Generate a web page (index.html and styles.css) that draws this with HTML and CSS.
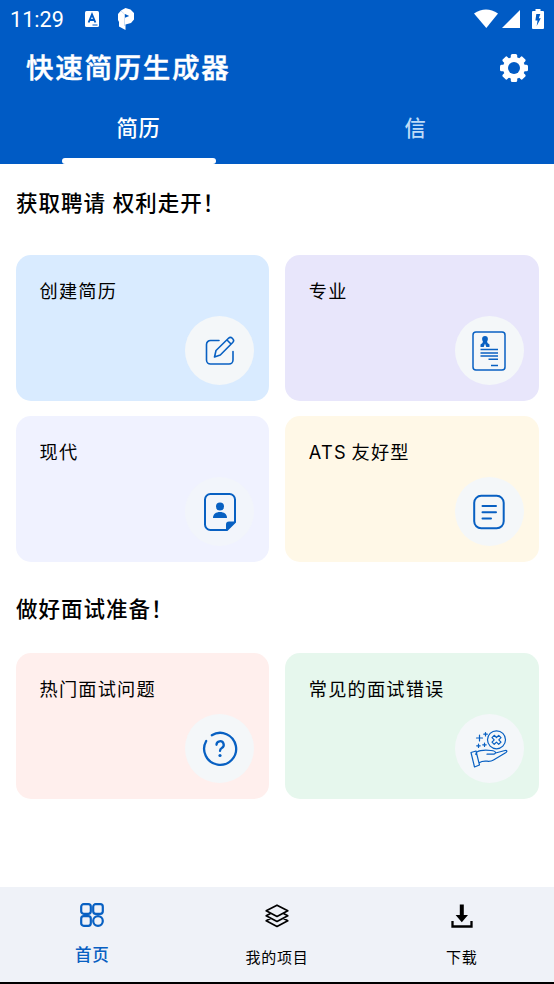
FILE: index.html
```
<!DOCTYPE html>
<html lang="zh-CN">
<head>
    <meta charset="UTF-8">
    <meta name="viewport" content="width=device-width, initial-scale=1.0">
    <title>快速简历生成器</title>
    <link rel="stylesheet" href="styles.css">
</head>
<body>

<header class="header">
    <div class="status-bar">
        <span class="time">11:29</span>
        <svg class="status-app" width="14" height="16" viewBox="0 0 14 16">
            <rect width="14" height="16" rx="1.5" fill="#fff"/>
            <path d="M3.6 11.5L7 3.5l3.4 8M4.8 9h4.4" fill="none" stroke="#005bc5" stroke-width="1.9"/>
            <path d="M7.5 14h5" stroke="#005bc5" stroke-width="1"/>
        </svg>
        <svg class="status-p" width="16" height="22" viewBox="0 0 16 22">
            <path d="M0 6l3-3.5L7.5 0l5 1.500L16 5v6.500L13 15l-5.500 1.500V22L1 18.500V14l-1-2z" fill="#fff"/>
            <path d="M7 6l4.200 2L7 9.800z" fill="#005bc5"/>
            <path d="M3 3l3.500 3v12" fill="none" stroke="#005bc5" stroke-opacity=".35" stroke-width=".6"/>
        </svg>
        <svg class="wifi" width="24" height="19" viewBox="0 0 24 19">
            <path d="M0 4.500Q12-3.500 24 4.500L12.300 19z" fill="#fff"/>
        </svg>
        <svg class="signal" width="18" height="18" viewBox="0 0 18 18">
            <path d="M0 18L18 0v18z" fill="#fff"/>
        </svg>
        <svg class="battery" width="12" height="20" viewBox="0 0 12 20">
            <path d="M3.500 0h5v2H11a1 1 0 0 1 1 1v16a1 1 0 0 1-1 1H1a1 1 0 0 1-1-1V3a1 1 0 0 1 1-1h2.500z" fill="#fff"/>
            <path d="M4.300 5h4L6.800 9.200h2L4.700 17l.8-5.500H3.400z" fill="#005bc5"/>
        </svg>
    </div>
    <div class="title-bar">
        <h1>快速简历生成器</h1>
        <svg class="settings" width="28" height="28" viewBox="-14 -14 28 28">
            <g fill="#fff">
                <rect x="-3.200" y="-14" width="6.400" height="28" rx="1.500"/>
                <rect x="-3.200" y="-14" width="6.400" height="28" rx="1.500" transform="rotate(45)"/>
                <rect x="-3.200" y="-14" width="6.400" height="28" rx="1.500" transform="rotate(90)"/>
                <rect x="-3.200" y="-14" width="6.400" height="28" rx="1.500" transform="rotate(135)"/>
                <circle r="11"/>
            </g>
            <circle r="6" fill="#005bc5"/>
        </svg>
    </div>
    <div class="tabs">
        <div class="tab active">简历</div>
        <div class="tab">信</div>
    </div>
</header>

<main class="content">
    <h2>获取聘请 权利走开！</h2>
    <div class="cards">
        <div class="card create">
            <span>创建简历</span>
            <div class="card-icon">
                <svg width="30" height="30" viewBox="0 0 30 30" fill="none" stroke="#0860c2" stroke-width="1.600" stroke-linecap="round" stroke-linejoin="round">
                    <path d="M14 4.500H5.500a4 4 0 0 0-4 4V24a4 4 0 0 0 4 4H24a4 4 0 0 0 4-4v-8.500"/>
                    <path d="M9.500 21l1.500-6.500L23.500 2.300a2.700 2.700 0 0 1 3.800 0l.4.400a2.700 2.700 0 0 1 0 3.800L15.300 19zM22.500 4.500l3.500 3.500"/>
                </svg>
            </div>
        </div>
        <div class="card professional">
            <span>专业</span>
            <div class="card-icon">
                <svg width="34" height="40" viewBox="0 0 34 40" fill="none" stroke="#0860c2" stroke-width="1.500">
                    <rect x="1" y="1" width="32" height="38" rx="3"/>
                    <circle cx="13" cy="8" r="2.900" fill="#0860c2" stroke="none"/>
                    <path d="M11 10h4l.5 2 2 1.500V16h-3.200L13 12.500 11.700 16H8.500v-2.500l2-1.500z" fill="#0860c2" stroke="none"/>
                    <path d="M8.500 18.500H26M8.500 22H26M8.500 25H26M16.500 28.200H26M19 34.500h7"/>
                </svg>
            </div>
        </div>
        <div class="card modern">
            <span>现代</span>
            <div class="card-icon">
                <svg width="32" height="40" viewBox="0 0 32 40">
                    <path d="M6.500 2h19A5.500 5.500 0 0 1 31 7.500V30l-8 8H6.500A5.500 5.500 0 0 1 1 32.500v-25A5.500 5.500 0 0 1 6.500 2z" fill="none" stroke="#0860c2" stroke-width="2"/>
                    <path d="M22 39v-6.500a3 3 0 0 1 3-3h7z" fill="#0860c2"/>
                    <circle cx="16" cy="14.500" r="4" fill="#0860c2"/>
                    <path d="M9 26c0-4 3-6 7-6s7 2 7 6z" fill="#0860c2"/>
                </svg>
            </div>
        </div>
        <div class="card ats">
            <span>ATS 友好型</span>
            <div class="card-icon">
                <svg width="32" height="36" viewBox="0 0 32 36" fill="none" stroke="#0860c2" stroke-width="2" stroke-linecap="round">
                    <rect x="1.200" y="1.800" width="29.500" height="32.500" rx="7"/>
                    <path d="M9.500 12h13.500M9.500 18.300h13.500M9.500 24.600h8.500"/>
                </svg>
            </div>
        </div>
    </div>

    <h2 class="prepare">做好面试准备！</h2>
    <div class="cards">
        <div class="card questions">
            <span>热门面试问题</span>
            <div class="card-icon">
                <svg width="36" height="36" viewBox="0 0 36 36" fill="none" stroke="#0860c2" stroke-width="2.300" stroke-linecap="round">
                    <path d="M9.800 4.200A16 16 0 1 1 4.200 10"/>
                    <path d="M14.500 13.800a3.600 3.600 0 1 1 5.300 3.200c-1.200.7-1.800 1.300-1.800 2.900"/>
                    <circle cx="18" cy="24.500" r="1.600" fill="#0860c2" stroke="none"/>
                </svg>
            </div>
        </div>
        <div class="card mistakes">
            <span>常见的面试错误</span>
            <div class="card-icon">
                <svg width="38" height="38" viewBox="0 0 38 38" fill="none" stroke="#0860c2" stroke-width="1.200" stroke-linejoin="round" stroke-linecap="round">
                    <circle cx="26.500" cy="9.800" r="9"/>
                    <path d="M26.500 7.500l2.200-2.200 2.300 2.300-2.200 2.200 2.200 2.300-2.300 2.200-2.200-2.200-2.300 2.200-2.200-2.200 2.200-2.300L22 7.600l2.200-2.300z"/>
                    <path d="M9.500 5v6M6.500 8h6M15.500 2.500v3.500M13.800 4.200h3.500M8.500 14v3.500M6.700 15.800h3.500M14.500 13v3.500M12.700 14.800h3.500"/>
                    <path d="M1 22.500l5-1.500 3.500 14-5 2zM5.500 24l1.500 1M7 22c4-2.500 9-2 14-1.500 3 .3 4.500 1 4.500 2s-1 1.800-3 1.700H17M25.500 23l9.500-2.500c2-.4 2.500 1 1 2L23.500 30c-2 1.200-4 1.500-6.500 1.200-3-.3-5.500 0-7.800 1.500"/>
                </svg>
            </div>
        </div>
    </div>
</main>

<nav class="bottom-nav">
    <div class="nav-item active">
        <svg width="24" height="24" viewBox="0 0 24 24" fill="none" stroke="#0860c2" stroke-width="2.200">
            <rect x="1.200" y="1.200" width="9.600" height="9.600" rx="2.500"/>
            <rect x="13.200" y="1.200" width="9.600" height="9.600" rx="2.500"/>
            <rect x="1.200" y="13.200" width="9.600" height="9.600" rx="2.500"/>
            <circle cx="18" cy="18" r="4.800"/>
        </svg>
        <span>首页</span>
    </div>
    <div class="nav-item">
        <svg width="24" height="24" viewBox="0 0 24 24" fill="none" stroke="#000" stroke-width="1.700" stroke-linejoin="round">
            <path d="M12 1.200l10.800 5.600L12 12.400 1.200 6.800z"/>
            <path d="M5.500 9.600l-4.300 2.200L12 17.400l10.800-5.600-4.300-2.200M5.500 14.600l-4.300 2.200L12 22.400l10.800-5.600-4.300-2.200"/>
        </svg>
        <span>我的项目</span>
    </div>
    <div class="nav-item">
        <svg width="24" height="24" viewBox="0 0 24 24">
            <path d="M9.800.5h4V11h4.200l-6.200 7.200L5.600 11h4.200z"/>
            <path d="M2.500 17v5.500h19V17" fill="none" stroke="#000" stroke-width="2.300"/>
        </svg>
        <span>下载</span>
    </div>
</nav>

</body>
</html>
```
FILE: styles.css
```
* {
    box-sizing: border-box;
}

body {
    margin: 0;
    height: 984px;
    display: flex;
    flex-direction: column;
    background-color: #fff;
    color: #000;
    font-family: Inter, "Noto Sans CJK SC", sans-serif;
}

h1, h2 {
    margin: 0;
    font-weight: 500;
}

svg {
    display: block;
    flex-shrink: 0;
}

.header {
    height: 164px;
    background-color: #005bc5;
    color: #fff;
}

.status-bar {
    display: flex;
    align-items: center;
    height: 37px;
    padding: 0 10px;
}

.time {
    width: 75px;
    padding-top: 1px;
    font-family: Roboto, sans-serif;
    font-size: 21.6px;
}

.status-p {
    margin-left: 19px;
}

.wifi {
    margin-left: auto;
}

.signal {
    margin-left: 4px;
}

.battery {
    margin-left: 12px;
}

.title-bar {
    display: flex;
    align-items: center;
    justify-content: space-between;
    height: 61px;
    padding: 0 26px;
}

.title-bar h1 {
    padding-bottom: 3px;
    font-size: 27.5px;
    letter-spacing: 1.7px;
    -webkit-text-stroke: 0.4px #fff;
}

.tabs {
    display: flex;
    height: 66px;
}

.tab {
    display: flex;
    flex: 1;
    flex-direction: column;
    align-items: center;
    padding-top: 14px;
    font-size: 21.3px;
    font-weight: 500;
    line-height: 32px;
    letter-spacing: 0.8px;
    color: #bfdcf8;
}

.tab.active {
    color: #fff;
}

.tab.active::after {
    content: "";
    width: 154px;
    height: 6px;
    margin-top: auto;
    border-radius: 3px;
    background-color: #fff;
}

.content {
    flex: 1;
    padding: 23px 15.5px 0 16px;
}

.content h2 {
    height: 68px;
    font-size: 21.5px;
    line-height: 32px;
    letter-spacing: 1px;
}

.content .prepare {
    height: 60px;
    margin-top: 31px;
}

.cards {
    display: grid;
    grid-template-columns: 1fr 1fr;
    gap: 15px 16px;
}

.card {
    display: flex;
    flex-direction: column;
    justify-content: space-between;
    height: 146px;
    padding: 22px 15px 16px 23.5px;
    border-radius: 15px;
    font-size: 18.2px;
    line-height: 28px;
    letter-spacing: 1.2px;
    word-spacing: -1.5px;
}

.card-icon {
    display: flex;
    align-items: center;
    justify-content: center;
    align-self: flex-end;
    width: 69px;
    height: 69px;
    border-radius: 50%;
    background-color: #f4f7f9;
}

.create {
    background-color: #d9ebff;
}

.professional {
    background-color: #e8e6fb;
}

.modern {
    background-color: #f0f2ff;
}

.modern .card-icon {
    background-color: #f2f5fb;
}

.ats {
    background-color: #fff8e7;
}

.questions {
    background-color: #ffefed;
}

.mistakes {
    background-color: #e6f7ed;
}

.bottom-nav {
    display: flex;
    height: 97px;
    border-bottom: 2px solid #000;
    background-color: #eff2f8;
}

.nav-item {
    display: flex;
    flex: 1;
    flex-direction: column;
    align-items: center;
    padding-top: 17px;
    font-size: 15px;
    line-height: 24px;
    letter-spacing: 0.8px;
}

.nav-item span {
    margin-top: 18px;
}

.nav-item.active {
    padding-top: 16px;
    font-size: 16.5px;
    font-weight: 500;
    color: #0860c2;
}

.nav-item.active span {
    margin-top: 16px;
}
```
